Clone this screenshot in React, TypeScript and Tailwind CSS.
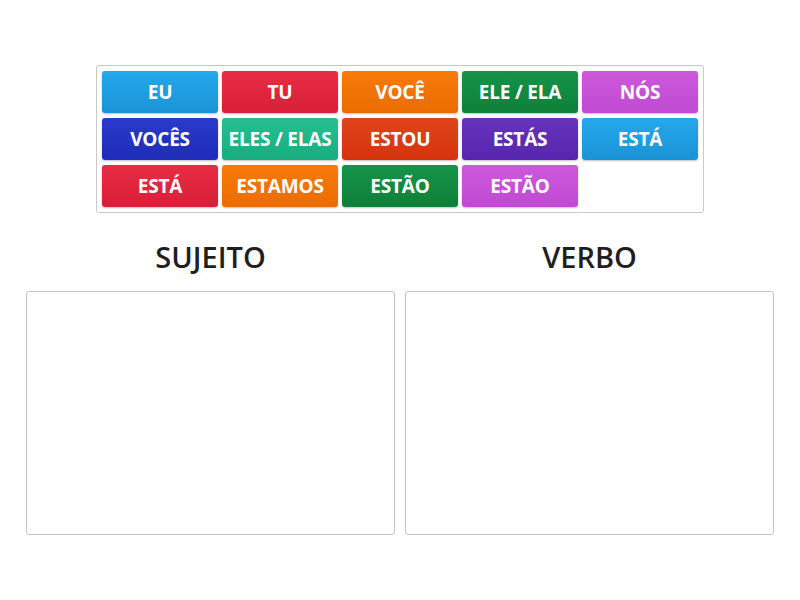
const tiles = [
  { label: "EU", cls: "from-[#25a8ec] to-[#1a93d6]" },
  { label: "TU", cls: "from-[#e82c44] to-[#d81f37]" },
  { label: "VOCÊ", cls: "from-[#f77a0a] to-[#ec6c00]" },
  { label: "ELE / ELA", cls: "from-[#16934a] to-[#0e8038]" },
  { label: "NÓS", cls: "from-[#cd58dc] to-[#c049d2]" },
  { label: "VOCÊS", cls: "from-[#2a3acb] to-[#1e2cb8]" },
  { label: "ELES / ELAS", cls: "from-[#25c08f] to-[#17ad7f]" },
  { label: "ESTOU", cls: "from-[#e2441a] to-[#d5330b]" },
  { label: "ESTÁS", cls: "from-[#6533bd] to-[#5726ad]" },
  { label: "ESTÁ", cls: "from-[#25a8ec] to-[#1a93d6]" },
  { label: "ESTÁ", cls: "from-[#e82c44] to-[#d81f37]" },
  { label: "ESTAMOS", cls: "from-[#f77a0a] to-[#ec6c00]" },
  { label: "ESTÃO", cls: "from-[#16934a] to-[#0e8038]" },
  { label: "ESTÃO", cls: "from-[#cd58dc] to-[#c049d2]" },
];

function Column({ title }: { title: string }) {
  return (
    <div className="flex w-[369px] flex-col">
      <div className="flex h-[78px] items-center justify-center pt-[10px] text-[29px] font-semibold text-[#1f1f1f]">
        {title}
      </div>
      <div className="h-[244px] rounded-[3px] border border-[#c4c4c4] bg-white" />
    </div>
  );
}

export default function App() {
  return (
    <div
      className="h-[600px] w-[800px] overflow-hidden bg-white pt-[65px]"
      style={{ fontFamily: '"Open Sans", "Noto Sans", sans-serif' }}
    >
      <div className="ml-[96px] w-[608px] rounded-[3px] border border-[#c9c9c9] p-[5px]">
        <div className="grid grid-cols-[repeat(5,116px)] grid-rows-[repeat(3,42px)] gap-x-[4px] gap-y-[5px]">
          {tiles.map((t, i) => (
            <div
              key={i}
              className={`flex items-center justify-center whitespace-nowrap rounded-[3px] bg-gradient-to-b text-[19px] font-bold tracking-[-0.2px] text-white shadow-[0_1px_2px_rgba(0,0,0,0.25)] ${t.cls}`}
            >
              {t.label}
            </div>
          ))}
        </div>
      </div>
      <div className="ml-[26px] flex gap-[10px]">
        <Column title="SUJEITO" />
        <Column title="VERBO" />
      </div>
    </div>
  );
}
